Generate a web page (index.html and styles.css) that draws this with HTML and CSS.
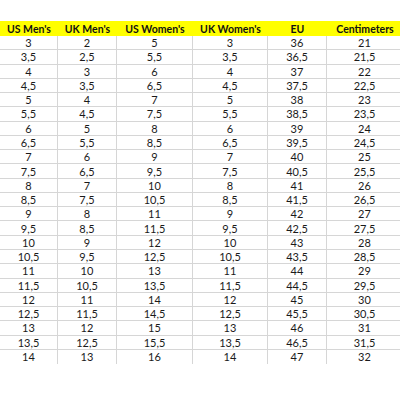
FILE: index.html
```html
<!DOCTYPE html>
<html>
<head>
<meta charset="utf-8">
<link rel="stylesheet" href="styles.css">
</head>
<body>
<div class="sheet">
  <div class="grid">
    <div class="h">US Men's</div><div class="h">UK Men's</div><div class="h">US Women's</div><div class="h">UK Women's</div><div class="h">EU</div><div class="h">Centimeters</div>
    <div class="c">3</div><div class="c">2</div><div class="c">5</div><div class="c">3</div><div class="c">36</div><div class="c">21</div>
    <div class="c">3,5</div><div class="c">2,5</div><div class="c">5,5</div><div class="c">3,5</div><div class="c">36,5</div><div class="c">21,5</div>
    <div class="c">4</div><div class="c">3</div><div class="c">6</div><div class="c">4</div><div class="c">37</div><div class="c">22</div>
    <div class="c">4,5</div><div class="c">3,5</div><div class="c">6,5</div><div class="c">4,5</div><div class="c">37,5</div><div class="c">22,5</div>
    <div class="c">5</div><div class="c">4</div><div class="c">7</div><div class="c">5</div><div class="c">38</div><div class="c">23</div>
    <div class="c">5,5</div><div class="c">4,5</div><div class="c">7,5</div><div class="c">5,5</div><div class="c">38,5</div><div class="c">23,5</div>
    <div class="c">6</div><div class="c">5</div><div class="c">8</div><div class="c">6</div><div class="c">39</div><div class="c">24</div>
    <div class="c">6,5</div><div class="c">5,5</div><div class="c">8,5</div><div class="c">6,5</div><div class="c">39,5</div><div class="c">24,5</div>
    <div class="c">7</div><div class="c">6</div><div class="c">9</div><div class="c">7</div><div class="c">40</div><div class="c">25</div>
    <div class="c">7,5</div><div class="c">6,5</div><div class="c">9,5</div><div class="c">7,5</div><div class="c">40,5</div><div class="c">25,5</div>
    <div class="c">8</div><div class="c">7</div><div class="c">10</div><div class="c">8</div><div class="c">41</div><div class="c">26</div>
    <div class="c">8,5</div><div class="c">7,5</div><div class="c">10,5</div><div class="c">8,5</div><div class="c">41,5</div><div class="c">26,5</div>
    <div class="c">9</div><div class="c">8</div><div class="c">11</div><div class="c">9</div><div class="c">42</div><div class="c">27</div>
    <div class="c">9,5</div><div class="c">8,5</div><div class="c">11,5</div><div class="c">9,5</div><div class="c">42,5</div><div class="c">27,5</div>
    <div class="c">10</div><div class="c">9</div><div class="c">12</div><div class="c">10</div><div class="c">43</div><div class="c">28</div>
    <div class="c">10,5</div><div class="c">9,5</div><div class="c">12,5</div><div class="c">10,5</div><div class="c">43,5</div><div class="c">28,5</div>
    <div class="c">11</div><div class="c">10</div><div class="c">13</div><div class="c">11</div><div class="c">44</div><div class="c">29</div>
    <div class="c">11,5</div><div class="c">10,5</div><div class="c">13,5</div><div class="c">11,5</div><div class="c">44,5</div><div class="c">29,5</div>
    <div class="c">12</div><div class="c">11</div><div class="c">14</div><div class="c">12</div><div class="c">45</div><div class="c">30</div>
    <div class="c">12,5</div><div class="c">11,5</div><div class="c">14,5</div><div class="c">12,5</div><div class="c">45,5</div><div class="c">30,5</div>
    <div class="c">13</div><div class="c">12</div><div class="c">15</div><div class="c">13</div><div class="c">46</div><div class="c">31</div>
    <div class="c">13,5</div><div class="c">12,5</div><div class="c">15,5</div><div class="c">13,5</div><div class="c">46,5</div><div class="c">31,5</div>
    <div class="c last">14</div><div class="c last">13</div><div class="c last">16</div><div class="c last">14</div><div class="c last">47</div><div class="c last">32</div>
  </div>
</div>
</body>
</html>
```
FILE: styles.css
```css
html, body {
  margin: 0;
  padding: 0;
  background: #ffffff;
}
.sheet {
  width: 400px;
  height: 400px;
  overflow: hidden;
  padding-top: 21px;
  box-sizing: border-box;
}
.grid {
  display: grid;
  grid-template-columns: 58px 59px 76px 75px 59px 76px;
  grid-template-rows: 15px;
  grid-auto-rows: 14.27px;
  width: 403px;
  font-family: Lato, "Open Sans", sans-serif;
  font-size: 11px;
  color: #1a1a1a;
}
.h {
  background: #ffff00;
  font-weight: bold;
  font-size: 10.5px;
  color: #111;
  display: flex;
  align-items: center;
  justify-content: center;
  white-space: nowrap;
}
.c {
  display: flex;
  align-items: center;
  justify-content: center;
  border-right: 1px solid #d6d6d6;
  border-bottom: 1px solid #d6d6d6;
  box-sizing: border-box;
  white-space: nowrap;
  line-height: 1;
}
.c.last {
  border-bottom: none;
}
```
